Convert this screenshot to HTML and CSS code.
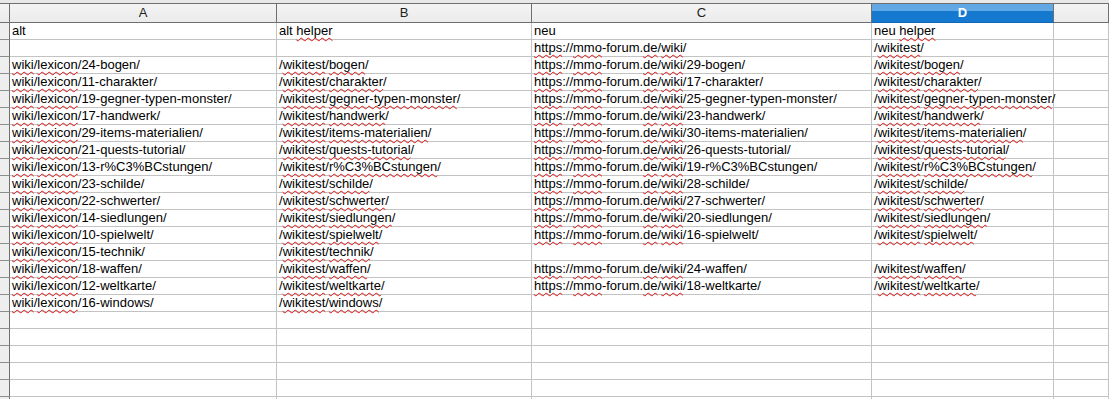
FILE: index.html
```html
<!DOCTYPE html>
<html lang="de">
<head>
    <meta charset="UTF-8">
    <meta name="viewport" content="width=device-width, initial-scale=1.0">
    <title>Tabelle1</title>
    <link rel="stylesheet" href="styles.css">
</head>
<body>
    <div class="topbar"></div>

    <div class="sheet" id="sheet">
        <div class="corner"></div>
        <div class="colhead">A</div>
        <div class="colhead">B</div>
        <div class="colhead">C</div>
        <div class="colhead selected">D</div>
        <div class="colhead"></div>
    </div>

    <script>
        // rows: alt, alt helper, neu, neu helper
        const rows = [
            ['alt', 'alt helper', 'neu', 'neu helper'],
            ['', '', 'https://mmo-forum.de/wiki/', '/wikitest/'],
            ['wiki/lexicon/24-bogen/', '/wikitest/bogen/', 'https://mmo-forum.de/wiki/29-bogen/', '/wikitest/bogen/'],
            ['wiki/lexicon/11-charakter/', '/wikitest/charakter/', 'https://mmo-forum.de/wiki/17-charakter/', '/wikitest/charakter/'],
            ['wiki/lexicon/19-gegner-typen-monster/', '/wikitest/gegner-typen-monster/', 'https://mmo-forum.de/wiki/25-gegner-typen-monster/', '/wikitest/gegner-typen-monster/'],
            ['wiki/lexicon/17-handwerk/', '/wikitest/handwerk/', 'https://mmo-forum.de/wiki/23-handwerk/', '/wikitest/handwerk/'],
            ['wiki/lexicon/29-items-materialien/', '/wikitest/items-materialien/', 'https://mmo-forum.de/wiki/30-items-materialien/', '/wikitest/items-materialien/'],
            ['wiki/lexicon/21-quests-tutorial/', '/wikitest/quests-tutorial/', 'https://mmo-forum.de/wiki/26-quests-tutorial/', '/wikitest/quests-tutorial/'],
            ['wiki/lexicon/13-r%C3%BCstungen/', '/wikitest/r%C3%BCstungen/', 'https://mmo-forum.de/wiki/19-r%C3%BCstungen/', '/wikitest/r%C3%BCstungen/'],
            ['wiki/lexicon/23-schilde/', '/wikitest/schilde/', 'https://mmo-forum.de/wiki/28-schilde/', '/wikitest/schilde/'],
            ['wiki/lexicon/22-schwerter/', '/wikitest/schwerter/', 'https://mmo-forum.de/wiki/27-schwerter/', '/wikitest/schwerter/'],
            ['wiki/lexicon/14-siedlungen/', '/wikitest/siedlungen/', 'https://mmo-forum.de/wiki/20-siedlungen/', '/wikitest/siedlungen/'],
            ['wiki/lexicon/10-spielwelt/', '/wikitest/spielwelt/', 'https://mmo-forum.de/wiki/16-spielwelt/', '/wikitest/spielwelt/'],
            ['wiki/lexicon/15-technik/', '/wikitest/technik/', '', ''],
            ['wiki/lexicon/18-waffen/', '/wikitest/waffen/', 'https://mmo-forum.de/wiki/24-waffen/', '/wikitest/waffen/'],
            ['wiki/lexicon/12-weltkarte/', '/wikitest/weltkarte/', 'https://mmo-forum.de/wiki/18-weltkarte/', '/wikitest/weltkarte/'],
            ['wiki/lexicon/16-windows/', '/wikitest/windows/', '', '']
        ];

        // words the spell checker flags
        function mark(text, col) {
            if (col === 1 || col === 3) {
                // helper columns: every path part without digits
                return text.split('/').map(p => p && !/^\d/.test(p) && p !== 'neu' ? '<span class="sp">' + p + '</span>' : p).join('/')
                    .replace('<span class="sp">neu helper</span>', 'neu <span class="sp">helper</span>')
                    .replace('<span class="sp">alt helper</span>', 'alt <span class="sp">helper</span>');
            }
            return text.replace(/\b(https|mmo|de|wiki|lexicon)\b/g, '<span class="sp">$1</span>');
        }

        const sheet = document.getElementById('sheet');
        const totalRows = 23;
        for (let r = 0; r < totalRows; r++) {
            const head = document.createElement('div');
            head.className = 'rowhead';
            sheet.appendChild(head);
            for (let c = 0; c < 5; c++) {
                const cell = document.createElement('div');
                cell.className = 'cell';
                const data = rows[r];
                if (data && c < 4 && data[c]) {
                    cell.innerHTML = mark(data[c], c);
                }
                sheet.appendChild(cell);
            }
        }
    </script>
</body>
</html>
```

FILE: styles.css
```css
body {
    margin: 0;
    padding: 0;
    background: #fff;
    font-family: "Liberation Sans", Arial, sans-serif;
    font-size: 13px;
    color: #000;
    overflow: hidden;
    height: 399px;
}

.topbar {
    height: 3px;
    background-color: #e9e9e9;
    border-bottom: 1px solid #6f6f6f;
}

.sheet {
    display: grid;
    grid-template-columns: 10px 267px 255px 340px 182px 1fr;
    grid-template-rows: 19px;
    grid-auto-rows: 17px;
}

.corner,
.colhead {
    background: linear-gradient(#f4f4f4, #ebebeb);
    border-right: 1px solid #6f6f6f;
    border-bottom: 1px solid #6f6f6f;
}

.colhead {
    text-align: center;
    line-height: 18px;
    color: #222;
}

.colhead:last-child {
    border-right: none;
}

.colhead.selected {
    background: linear-gradient(#62a8e4 0, #62a8e4 40%, #1479cf 40%, #1479cf 100%);
    color: #fff;
    font-weight: bold;
    border-bottom-color: #1168b8;
}

.rowhead {
    background-color: #eeeeee;
    border-right: 1px solid #6f6f6f;
    border-bottom: 1px solid #8e8e8e;
}

.cell {
    border-right: 1px solid #c3c3c3;
    border-bottom: 1px solid #c3c3c3;
    padding-left: 2px;
    line-height: 16px;
    white-space: nowrap;
    overflow: visible;
}

.sp {
    text-decoration: underline wavy #e01010;
    text-decoration-thickness: 1px;
    text-underline-offset: 2px;
    text-decoration-skip-ink: none;
}
```
